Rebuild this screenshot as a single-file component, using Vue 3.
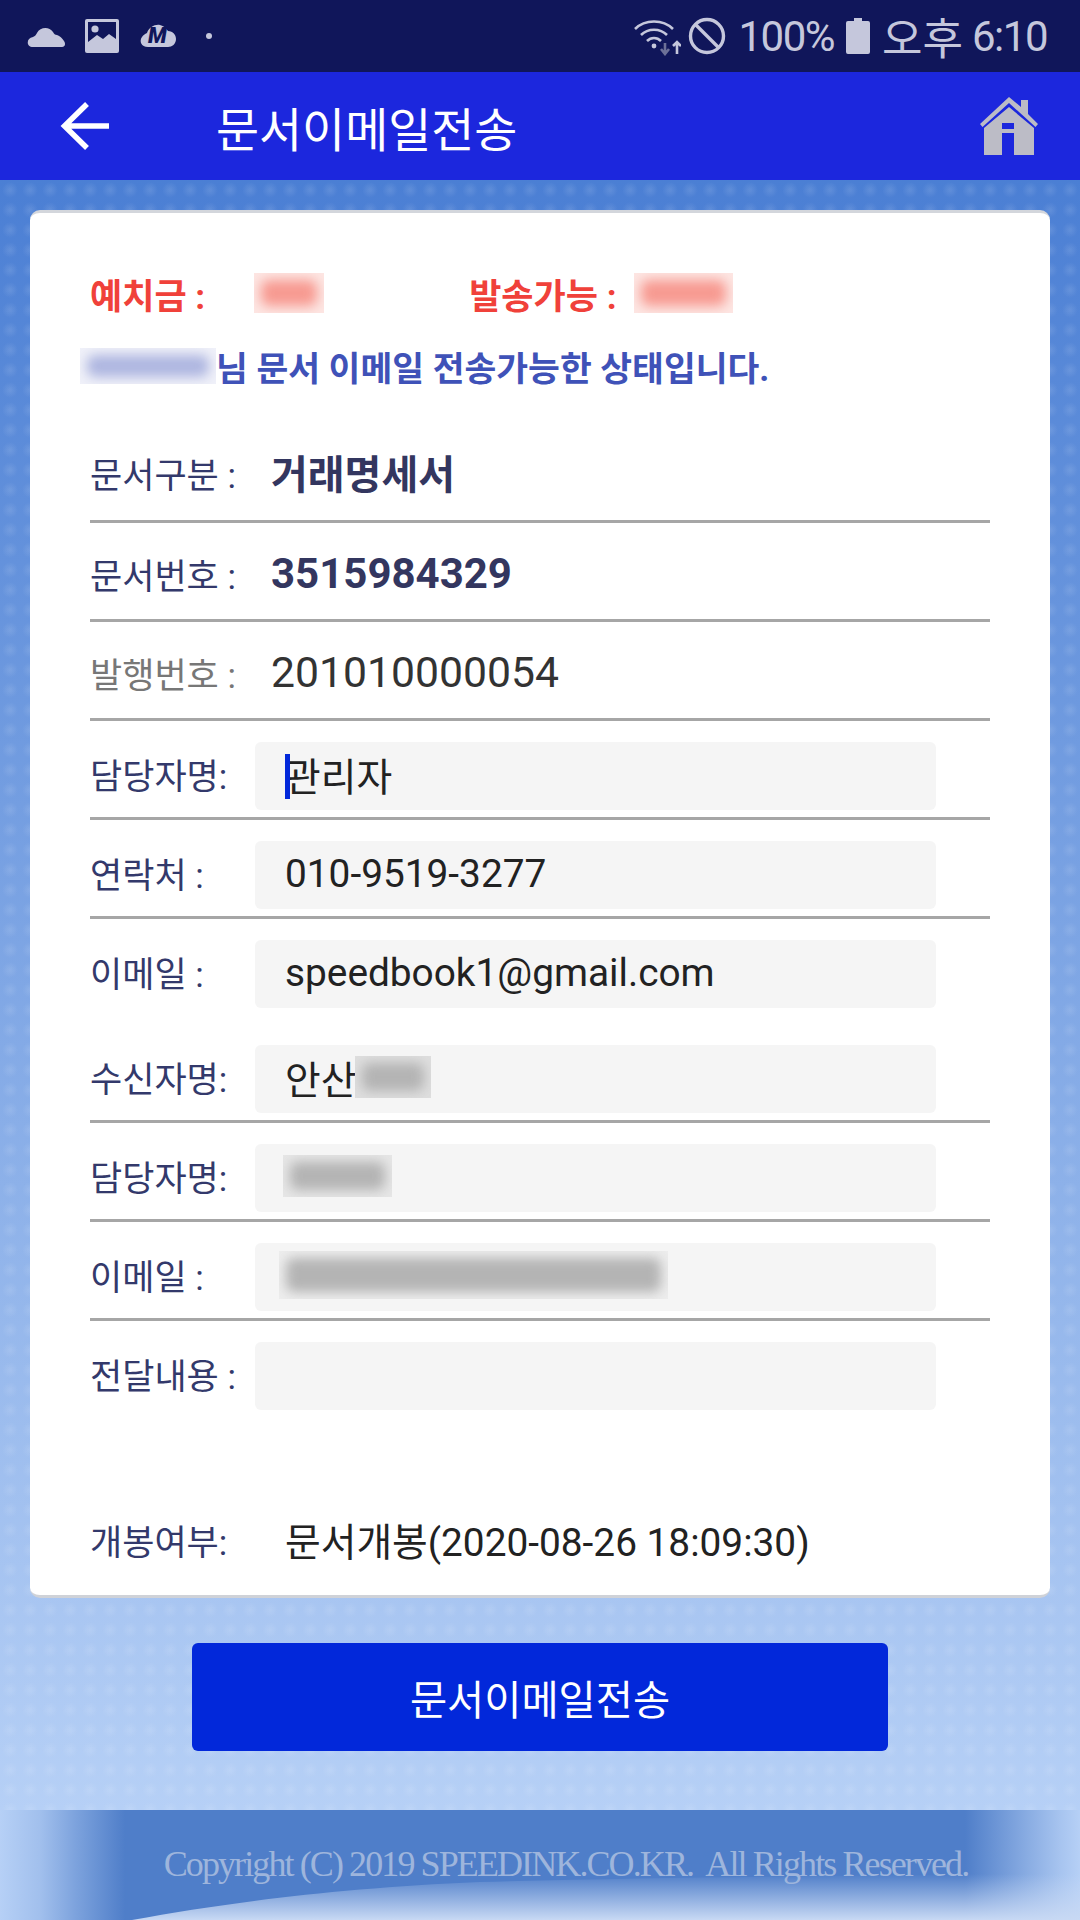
<template>
  <div class="screen">
    <div class="status">
      <div class="status-left">
        <svg width="40" height="24" viewBox="0 0 40 24"><path d="M6 23c-7 0-7-9 0-10 2-1 3-2 4-4 3-6 12-7 16-1 1 2 2 3 4 3 3 1 5 3 7 6 2 3 1 6-2 6z" fill="#c5c7dc"/></svg>
        <svg width="36" height="36" viewBox="0 0 36 36" class="pic-icon">
          <rect x="1" y="1" width="34" height="34" rx="2" fill="#c5c7dc"/>
          <rect x="4" y="4" width="28" height="28" fill="#10165a"/>
          <circle cx="11" cy="11" r="3.6" fill="#c5c7dc"/>
          <path d="M4 24 13 17l6 4 6-5 7 5v11H4z" fill="#c5c7dc"/>
        </svg>
        <div class="app-icon">
          <svg width="38" height="28" viewBox="0 0 38 28"><path d="M9 25C2 25 0 19 3 15c1-2 3-3 5-4 2-6 8-9 13-8 4 1 6 3 8 6 5 0 8 4 8 8 0 5-4 8-8 8z" fill="#c5c7dc"/></svg>
          <span class="app-m">M</span>
        </div>
        <span class="dot"></span>
      </div>
      <div class="status-right">
        <svg width="48" height="40" viewBox="0 0 48 40" fill="none" stroke="#c5c7dc" stroke-width="2.6">
          <path d="M2 13C12 3 30 3 40 13"/>
          <path d="M8 19c7-7 19-7 26 0"/>
          <path d="M14 25c4-4 10-4 14 0"/>
          <circle cx="21" cy="30" r="2.4" fill="#c5c7dc" stroke="none"/>
          <path d="M32 27v11M28 33l4 5 4-5" stroke="#6d7198"/>
          <path d="M44 38V26M40 30l4-4 4 4" stroke="#c5c7dc"/>
        </svg>
        <svg width="38" height="38" viewBox="0 0 38 38" fill="none" stroke="#c5c7dc" stroke-width="3.4">
          <circle cx="19" cy="19" r="16.5"/>
          <path d="M7.500 7.500 30.500 30.500"/>
        </svg>
        <span class="status-text pct">100%</span>
        <svg width="24" height="36" viewBox="0 0 24 36"><path d="M8 0h8v3h6q2 0 2 2v29q0 2-2 2H2q-2 0-2-2V5q0-2 2-2h6z" fill="#c5c7dc"/></svg>
        <span class="status-text ampm">오후</span>
        <span class="status-text clock">6:10</span>
      </div>
    </div>

    <div class="appbar">
      <svg class="back" width="50" height="50" viewBox="0 0 50 50" fill="none" stroke="#fff" stroke-width="5.500">
        <path d="M49 25H4M27 3 4.500 25 27 47"/>
      </svg>
      <div class="title">문서이메일전송</div>
      <svg class="home" width="58" height="58" viewBox="0 0 58 58">
        <path d="M29 0 41 10V3h7v14l10 10-2.500 3L29 6 2.500 30 0 27z" fill="#bcbcc6"/>
        <path d="M4 31 29 10l25 21v27H34V36H22v22H4z" fill="#bcbcc6"/>
        <rect x="22" y="26" width="12" height="6" fill="#1c27dd"/>
      </svg>
    </div>

    <div class="main">
      <div class="card">
        <div class="balance">
          <span class="bal-label">예치금 :</span>
          <span class="blur blur-red short"></span>
          <span class="bal-label second">발송가능 :</span>
          <span class="blur blur-red long"></span>
        </div>
        <div class="info">
          <span class="blur blur-blue"></span><span>님 문서 이메일 전송가능한 상태입니다.</span>
        </div>

        <div class="row">
          <span class="label">문서구분 :</span>
          <span class="value strong">거래명세서</span>
        </div>
        <div class="row low">
          <span class="label">문서번호 :</span>
          <span class="value strong num">3515984329</span>
        </div>
        <div class="row low">
          <span class="label muted">발행번호 :</span>
          <span class="value">201010000054</span>
        </div>

        <div class="row field-row">
          <span class="label">담당자명:</span>
          <div class="field"><i class="cursor"></i>관리자</div>
        </div>
        <div class="row field-row">
          <span class="label">연락처 :</span>
          <div class="field">010-9519-3277</div>
        </div>
        <div class="row field-row no-line">
          <span class="label">이메일 :</span>
          <div class="field">speedbook1@gmail.com</div>
        </div>
        <div class="row field-row taller">
          <span class="label">수신자명:</span>
          <div class="field">안산<span class="blur blur-gray w-a"></span></div>
        </div>
        <div class="row field-row">
          <span class="label">담당자명:</span>
          <div class="field"><span class="blur blur-gray w-b"></span></div>
        </div>
        <div class="row field-row">
          <span class="label">이메일 :</span>
          <div class="field"><span class="blur blur-gray w-c"></span></div>
        </div>
        <div class="row field-row no-line">
          <span class="label">전달내용 :</span>
          <div class="field"></div>
        </div>

        <div class="opened">
          <span class="label">개봉여부:</span>
          <span class="opened-val">문서개봉(2020-08-26 18:09:30)</span>
        </div>
      </div>

      <div class="send">문서이메일전송</div>
    </div>

    <div class="footer">
      <svg class="swoosh" width="1080" height="110" viewBox="0 0 1080 110">
        <defs>
          <linearGradient id="sw" gradientUnits="userSpaceOnUse" x1="0" y1="64" x2="0" y2="110">
            <stop offset="0" stop-color="#c8d9f4" stop-opacity="0"/>
            <stop offset="1" stop-color="#c8d9f4" stop-opacity="1"/>
          </linearGradient>
        </defs>
        <path d="M132 110C230 92 340 78 480 72 700 66 900 66 1080 62V110z" fill="url(#sw)"/>
      </svg>
      <span class="copy">Copyright (C) 2019 SPEEDINK.CO.KR.&nbsp; All Rights Reserved.</span>
    </div>
  </div>
</template>

<script setup>
</script>

<style>
html, body {
  margin: 0;
  padding: 0;
}
</style>

<style scoped>
.screen {
  width: 1080px;
  height: 1920px;
  display: flex;
  flex-direction: column;
  overflow: hidden;
  font-family: Roboto, "Noto Sans CJK KR", sans-serif;
}

.status {
  height: 72px;
  background: #10165a;
  display: flex;
  align-items: center;
  justify-content: space-between;
  padding: 0 33px 0 27px;
  color: #c5c7dc;
}
.status-left {
  display: flex;
  align-items: center;
  gap: 18px;
}
.pic-icon {
  margin-left: -1px;
}
.app-icon {
  position: relative;
  width: 38px;
  height: 28px;
  margin-left: 1px;
}
.app-m {
  position: absolute;
  left: 9px;
  top: 0;
  font-size: 22px;
  line-height: 28px;
  font-weight: 900;
  font-style: italic;
  color: #10165a;
}
.dot {
  width: 6px;
  height: 6px;
  border-radius: 50%;
  background: #c5c7dc;
  margin-left: 11px;
}
.status-right {
  display: flex;
  align-items: center;
  gap: 7px;
}
.status-text {
  font-size: 42px;
  letter-spacing: -1.5px;
  white-space: nowrap;
}
.pct {
  margin: 0 5px;
}
.ampm {
  margin-left: 5px;
  font-size: 44px;
  letter-spacing: 0;
}
.clock {
  margin-left: 2px;
  letter-spacing: -1.5px;
}

.appbar {
  height: 108px;
  background: #1c27dd;
  display: flex;
  align-items: center;
  padding: 0 42px 0 60px;
}
.back {
  flex: none;
}
.title {
  flex: 1;
  margin-left: 106px;
  font-size: 46.800px;
  color: #fff;
}
.home {
  flex: none;
}

.main {
  flex: 1;
  padding: 30px 30px 0;
  background-color: #7ea4e4;
  background-image:
    radial-gradient(circle at 50% 50%, rgba(255, 255, 255, 0.1) 1px, transparent 8px),
    linear-gradient(180deg, #4b7fd4 0%, #b6d0f6 100%);
  background-size: 20px 20px, 100% 100%;
}
.card {
  height: 1388px;
  box-sizing: border-box;
  background: #fff;
  border-radius: 10px;
  border-top: 3px solid #d3d6dc;
  border-bottom: 3px solid #cfd2d8;
  padding: 57px 60px 0;
}

.balance {
  height: 46px;
  display: flex;
  align-items: center;
  color: #f0413a;
}
.bal-label {
  font-size: 35px;
  font-weight: 700;
  white-space: nowrap;
}
.second {
  margin-left: 145px;
}

.blur {
  display: inline-block;
  position: relative;
  overflow: hidden;
  vertical-align: middle;
}
.blur::before {
  content: "";
  position: absolute;
  inset: 7px;
  border-radius: 8px;
  filter: blur(6px);
  background: var(--smear);
}
.blur-red {
  height: 40px;
  --smear: #f79a91;
  background: #fde6e3;
}
.short {
  width: 70px;
  margin-left: 49px;
}
.long {
  width: 99px;
  margin-left: 17px;
}
.blur-blue {
  width: 136px;
  height: 36px;
  margin-left: -10px;
  --smear: #aeb6e0;
  background: #f0f1f9;
}

.info {
  margin-top: 29px;
  height: 42px;
  display: flex;
  align-items: center;
  font-size: 34.600px;
  font-weight: 700;
  color: #3f52b8;
  white-space: nowrap;
}

.row {
  height: 99px;
  box-sizing: border-box;
  border-bottom: 3px solid #a6a6a6;
  display: flex;
  align-items: center;
  width: 900px;
}
.low {
  padding-top: 4px;
}
.info + .row {
  margin-top: 37px;
}
.label {
  flex: none;
  width: 165px;
  font-size: 35px;
  color: #33396b;
  white-space: nowrap;
}
.muted {
  color: #777;
}
.value {
  margin-left: 16px;
  font-size: 42.700px;
  color: #333;
}
.strong {
  font-weight: 700;
  font-size: 40px;
  color: #33365f;
}
.num {
  font-size: 42px;
}

.field-row {
  align-items: flex-start;
  padding-top: 21px;
}
.field-row .label {
  line-height: 71px;
}
.no-line {
  border-bottom-color: transparent;
}
.taller {
  height: 105px;
  padding-top: 27px;
}
.field {
  position: relative;
  width: 681px;
  height: 68px;
  box-sizing: border-box;
  padding: 0 0 4px 30px;
  border-radius: 6px;
  background: #f5f5f5;
  display: flex;
  align-items: center;
  font-size: 38.800px;
  color: #222;
  white-space: nowrap;
}
.cursor {
  position: absolute;
  left: 30px;
  top: 12px;
  width: 5px;
  height: 45px;
  background: #0228da;
}
.blur-gray {
  --smear: #b4b4b4;
  background: #dedede;
  height: 42px;
}
.w-a {
  width: 76px;
  margin-left: -1px;
}
.w-b {
  width: 109px;
  margin-left: -2px;
  background: #e6e6e6;
}
.w-c {
  width: 389px;
  height: 48px;
  margin-left: -6px;
  background: #ededed;
}

.opened {
  margin-top: 89px;
  height: 60px;
  display: flex;
  align-items: center;
}
.opened-val {
  margin-left: 30px;
  font-size: 38.800px;
  color: #222;
  white-space: nowrap;
}

.send {
  width: 696px;
  height: 108px;
  margin: 45px auto 0;
  border-radius: 6px;
  background: #0228da;
  color: #fff;
  font-size: 40.400px;
  display: flex;
  align-items: center;
  justify-content: center;
}

.footer {
  position: relative;
  height: 110px;
  display: flex;
  align-items: center;
  justify-content: center;
  padding-left: 52px;
  box-sizing: border-box;
  overflow: hidden;
  background-color: #b6d0f6;
  background-image:
    linear-gradient(90deg, rgba(79, 126, 201, 0) 0, rgba(79, 126, 201, 0.2) 40px, rgba(79, 126, 201, 0.55) 75px, #4f7ec9 125px, #4f7ec9 965px, rgba(79, 126, 201, 0.5) 1020px, rgba(79, 126, 201, 0.15) 1060px, rgba(79, 126, 201, 0) 1080px);
}
.swoosh {
  position: absolute;
  left: 0;
  top: 0;
}
.copy {
  position: relative;
  top: -1px;
  font-family: "Liberation Serif", serif;
  font-size: 36px;
  letter-spacing: -1.9px;
  color: #9eb5dc;
  white-space: nowrap;
}
</style>
